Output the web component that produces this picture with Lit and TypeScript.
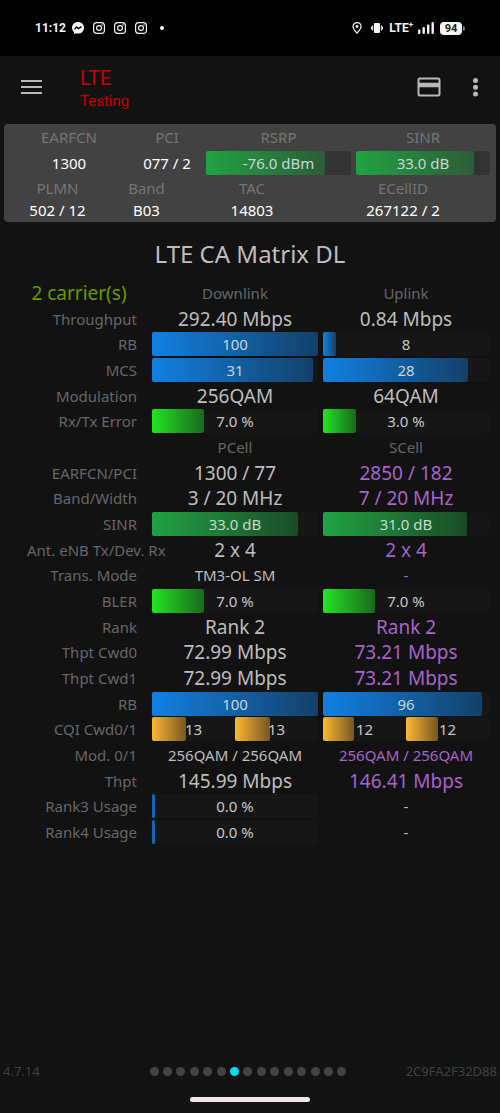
import { LitElement, html, css, nothing } from "lit";
import { customElement, property, state } from "lit/decorators.js";
import { classMap } from "lit/directives/class-map.js";
import { styleMap } from "lit/directives/style-map.js";

type Tone = "blue" | "green" | "lime" | "amber";
interface Bar { text: string; fill: number; tone: Tone }
interface Cell { text?: string; small?: boolean; dim?: boolean; accent?: boolean; bars?: Bar[] }
interface Row { label: string; cells: Cell[] }

const bar = (text: string, fill: number, tone: Tone): Cell => ({ bars: [{ text, fill, tone }] });
const big = (text: string): Cell => ({ text });
const alt = (text: string, small = false): Cell => ({ text, small, accent: true });
const note = (text: string): Cell => ({ text, small: true });
const head = (text: string): Cell => ({ text, small: true, dim: true });

const ROWS: Row[] = [
  { label: "Throughput", cells: [big("292.40 Mbps"), big("0.84 Mbps")] },
  { label: "RB", cells: [bar("100", 100, "blue"), bar("8", 8, "blue")] },
  { label: "MCS", cells: [bar("31", 97, "blue"), bar("28", 87.5, "blue")] },
  { label: "Modulation", cells: [big("256QAM"), big("64QAM")] },
  { label: "Rx/Tx Error", cells: [bar("7.0 %", 31.5, "lime"), bar("3.0 %", 20, "lime")] },
  { label: "", cells: [head("PCell"), head("SCell")] },
  { label: "EARFCN/PCI", cells: [big("1300 / 77"), alt("2850 / 182")] },
  { label: "Band/Width", cells: [big("3 / 20 MHz"), alt("7 / 20 MHz")] },
  { label: "SINR", cells: [bar("33.0 dB", 88, "green"), bar("31.0 dB", 86.5, "green")] },
  { label: "Ant. eNB Tx/Dev. Rx", cells: [big("2 x 4"), alt("2 x 4")] },
  { label: "Trans. Mode", cells: [note("TM3-OL SM"), alt("-", true)] },
  { label: "BLER", cells: [bar("7.0 %", 31.5, "lime"), bar("7.0 %", 31.5, "lime")] },
  { label: "Rank", cells: [big("Rank 2"), alt("Rank 2")] },
  { label: "Thpt Cwd0", cells: [big("72.99 Mbps"), alt("73.21 Mbps")] },
  { label: "Thpt Cwd1", cells: [big("72.99 Mbps"), alt("73.21 Mbps")] },
  { label: "RB", cells: [bar("100", 100, "blue"), bar("96", 96, "blue")] },
  {
    label: "CQI Cwd0/1",
    cells: [
      { bars: [{ text: "13", fill: 41.5, tone: "amber" }, { text: "13", fill: 42.5, tone: "amber" }] },
      { bars: [{ text: "12", fill: 37.5, tone: "amber" }, { text: "12", fill: 38.5, tone: "amber" }] },
    ],
  },
  { label: "Mod. 0/1", cells: [note("256QAM / 256QAM"), alt("256QAM / 256QAM", true)] },
  { label: "Thpt", cells: [big("145.99 Mbps"), alt("146.41 Mbps")] },
  { label: "Rank3 Usage", cells: [bar("0.0 %", 2, "blue"), note("-")] },
  { label: "Rank4 Usage", cells: [bar("0.0 %", 2, "blue"), note("-")] },
];

@customElement("level-bar")
class LevelBar extends LitElement {
  @property() text = "";
  @property({ type: Number }) fill = 0;
  @property() tone: Tone = "blue";

  static styles = css`
    :host { display: block; flex: 1 1 0; min-width: 0; }
    .track { display: grid; height: 24px; border-radius: 2px; background: var(--track, #161616); }
    .fill, .text { grid-area: 1 / 1; }
    .fill { border-radius: 2px; }
    .text { text-align: center; line-height: 24px; font-size: var(--bar-text, 14px); color: #c6c6c6; z-index: 1; white-space: nowrap; }
    .filled { color: #c8d6d4; }
    .blue { background: linear-gradient(90deg, #1180e2, #14406a); }
    .green { background: linear-gradient(90deg, #21a243, var(--green-end, #1b4b26)); }
    .lime { background: linear-gradient(90deg, #23e423, #1a691b); }
    .amber { background: linear-gradient(90deg, #fcb834, #765721); }
    .tiny { background: #1366b2; }
  `;

  render() {
    return html`<div class="track" role="meter" aria-valuenow=${this.fill} aria-valuetext=${this.text}>
      <div class=${classMap({ fill: true, [this.tone]: true, tiny: this.fill < 5 })}
        style=${styleMap({ width: `${this.fill}%` })}></div>
      <div class=${classMap({ text: true, filled: this.fill > 50 })}>${this.text}</div>
    </div>`;
  }
}

@customElement("status-bar")
class StatusBar extends LitElement {
  static styles = css`
    :host { display: flex; align-items: center; justify-content: space-between; height: 56px;
      padding: 0 35px; background: #000; color: #f4f4f4; font-family: Roboto, sans-serif; }
    .group { display: flex; align-items: center; }
    .left { gap: 9px; }
    .time { width: 28px; font-size: 12px; font-weight: 700; line-height: 16px; }
    .dot { width: 4px; height: 4px; border-radius: 2px; background: #f4f4f4; margin-left: 4px; }
    .icon { display: block; }
    .vibrate { margin-left: 9px; }
    .battery { display: flex; align-items: center; margin-left: 6px; }
    .level { background: #f4f4f4; color: #222; border-radius: 4px; width: 22px; height: 13px;
      font-size: 11px; line-height: 13px; font-weight: 700; text-align: center; }
    .cap { width: 2px; height: 5px; background: #777; border-radius: 0 2px 2px 0; margin-left: 1px; }
    .lte { font-size: 12px; font-weight: 700; line-height: 16px; margin-left: 6px; }
    .plus { font-size: 8px; vertical-align: 5px; line-height: 1px; }
    .signal { margin-left: 5px; }
  `;

  private camera() {
    return html`<svg class="icon" width="12" height="12" viewBox="0 0 12 12" fill="none" stroke="#f4f4f4">
      <rect x=".6" y=".6" width="10.8" height="10.8" rx="3.2" stroke-width="1.2"></rect>
      <circle cx="6" cy="6" r="2.4" stroke-width="1.2"></circle>
      <circle cx="9" cy="3" r=".5" fill="#f4f4f4" stroke-width=".4"></circle>
    </svg>`;
  }

  render() {
    return html`
      <div class="group left">
        <span class="time">11:12</span>
        <svg class="icon" width="12" height="12" viewBox="0 0 12 12">
          <path fill="#f4f4f4" d="M6 0C2.6 0 0 2.4 0 5.7c0 1.7.7 3.2 1.9 4.2v1.7c0 .3.3.5.6.4l1.5-.7c.6.2 1.3.3 2 .3 3.4 0 6-2.5 6-5.9S9.4 0 6 0z"></path>
          <path d="M2.5 7.3l2-2.4 2 1.7 3-2" fill="none" stroke="#000" stroke-width="1.3"></path>
        </svg>
        ${this.camera()}${this.camera()}${this.camera()}
        <span class="dot"></span>
      </div>
      <div class="group">
        <svg class="icon" width="10" height="12" viewBox="0 0 10 12">
          <path d="M5 .7C2.7.7 1 2.3 1 4.6 1 7 5 11.2 5 11.2S9 7 9 4.6C9 2.3 7.3.7 5 .7z" fill="none" stroke="#f4f4f4" stroke-width="1.2"></path>
          <circle cx="5" cy="4.5" r="1.4" fill="#f4f4f4"></circle>
        </svg>
        <svg class="icon vibrate" width="12" height="12" viewBox="0 0 12 12" fill="#f4f4f4">
          <rect x="3" y="1" width="6" height="10" rx="1"></rect>
          <rect x="1.2" y="3.5" width="1" height="5"></rect><rect x="9.8" y="3.5" width="1" height="5"></rect>
          <rect x="0" y="4.5" width="1" height="3"></rect><rect x="11" y="4.5" width="1" height="3"></rect>
        </svg>
        <span class="lte">LTE<span class="plus">+</span></span>
        <svg class="icon signal" width="16" height="12" viewBox="0 0 16 12" fill="#f4f4f4">
          <rect x="0" y="7.5" width="2.4" height="4.5" rx="1"></rect>
          <rect x="4.5" y="5" width="2.4" height="7" rx="1"></rect>
          <rect x="9" y="2.5" width="2.4" height="9.5" rx="1"></rect>
          <rect x="13.5" y="0" width="2.4" height="12" rx="1"></rect>
        </svg>
        <span class="battery"><span class="level">94</span><span class="cap"></span></span>
      </div>`;
  }
}

@customElement("app-root")
class AppRoot extends LitElement {
  @state() private page = 6;

  static styles = css`
    :host { display: flex; flex-direction: column; min-height: 100vh; background: #121212; color: #bdbdbd;
      font-family: "Noto Sans", "Open Sans", sans-serif; font-size: 15px; --bar-text: 15px; }
    .toolbar { display: flex; align-items: center; box-sizing: border-box; height: 64px; padding: 0 13px 2px 19px; margin-bottom: 4px; }
    .icon-button { display: block; border: 0; padding: 0; background: none; color: #b9b9b9; }
    .icon-button svg { display: block; }
    .heading { flex: 1; padding: 4px 0 0 37px; color: #cb0000; font-family: Roboto, sans-serif; }
    .name { margin: 0; font-size: 20px; line-height: 24px; font-weight: 400; }
    .sub { margin: 0; font-size: 15px; line-height: 22px; }
    .more { margin-left: 22px; }
    .card { box-sizing: border-box; margin: 0 4px; padding: 2px 6px 0; height: 98px; border-radius: 4px; background: #424242;
      --track: #333; --green-end: #2d5c38; }
    .signal, .ids { display: grid; text-align: center; color: #fff; }
    .signal { grid-template-columns: 118fr 68fr 145fr 134fr; column-gap: 5px; }
    .ids { grid-template-columns: 95fr 83fr 128fr 174fr; margin-top: 2px; }
    .key { color: #757575; line-height: 22px; height: 25px; }
    .ids .key { height: 23px; }
    .value { line-height: 24px; }
    .ids .value { line-height: 20px; }
    .title { margin: 16px 0 10px; text-align: center; font-size: 24px; line-height: 32px; font-weight: 400; }
    .matrix { table-layout: fixed; border-collapse: collapse; width: calc(100% - 8px); height: 565px; }
    .matrix col.labels { width: 150px; }
    .matrix td, .matrix th { padding: 0 3px 0 2px; text-align: center; font-weight: 400; white-space: nowrap;
      font-size: 19px; line-height: 24px; }
    .matrix th.label { padding: 0 13px 0 27px; text-align: right; font-size: 15px; color: #666; }
    .matrix .small { font-size: 15px; }
    .matrix .dim { color: #666; }
    .matrix .accent { color: #a763cc; }
    .matrix th.carriers { padding: 0 8px 0 16px; color: #679a00; }
    .pair { display: flex; }
    .footer { display: grid; grid-template-columns: 1fr auto 1fr; align-items: center; margin-top: auto;
      padding: 0 3px; font-size: 13px; line-height: 20px; color: #404040; }
    .serial { text-align: right; }
    .dots { display: flex; justify-content: space-between; width: 197px; margin-right: 4px; }
    .dot { width: 9px; height: 9px; padding: 0; border: 0; border-radius: 50%; background: #434343; }
    .dot.current { background: #00dcff; }
    .home { align-self: center; width: 24%; height: 5px; margin: 16px 0 11px; border-radius: 3px; background: #ebe7eb; }
  `;

  private cell(c: Cell) {
    if (c.bars) {
      return html`<td><div class="pair">${c.bars.map(
        (b) => html`<level-bar .text=${b.text} .fill=${b.fill} .tone=${b.tone}></level-bar>`,
      )}</div></td>`;
    }
    return html`<td class=${classMap({ small: !!c.small, dim: !!c.dim, accent: !!c.accent })}>${c.text}</td>`;
  }

  render() {
    return html`
      <status-bar></status-bar>
      <header class="toolbar">
        <button class="icon-button" aria-label="Menu">
          <svg width="24" height="24" viewBox="0 0 24 24" fill="currentColor">
            <rect x="2" y="5" width="21" height="2"></rect><rect x="2" y="11" width="21" height="2"></rect><rect x="2" y="17" width="21" height="2"></rect>
          </svg>
        </button>
        <div class="heading"><h1 class="name">LTE</h1><p class="sub">Testing</p></div>
        <button class="icon-button" aria-label="SIM card">
          <svg width="24" height="24" viewBox="0 0 24 24" fill="none" stroke="currentColor">
            <rect x="1.5" y="3.5" width="21" height="17" rx="1.5" stroke-width="2"></rect>
            <path d="M2 10h20" stroke-width="4.500"></path>
          </svg>
        </button>
        <button class="icon-button more" aria-label="More options">
          <svg width="24" height="24" viewBox="0 0 24 24" fill="currentColor">
            <circle cx="12.500" cy="5.500" r="2.500"></circle><circle cx="12.500" cy="12.200" r="2.500"></circle><circle cx="12.500" cy="19" r="2.500"></circle>
          </svg>
        </button>
      </header>
      <section class="card">
        <div class="signal">
          <span class="key">EARFCN</span><span class="key">PCI</span><span class="key">RSRP</span><span class="key">SINR</span>
          <span class="value">1300</span><span class="value">077 / 2</span>
          <level-bar text="-76.0 dBm" fill="82" tone="green"></level-bar>
          <level-bar text="33.0 dB" fill="88" tone="green"></level-bar>
        </div>
        <div class="ids">
          <span class="key">PLMN</span><span class="key">Band</span><span class="key">TAC</span><span class="key">ECellID</span>
          <span class="value">502 / 12</span><span class="value">B03</span><span class="value">14803</span><span class="value">267122 / 2</span>
        </div>
      </section>
      <h2 class="title">LTE CA Matrix DL</h2>
      <table class="matrix">
        <colgroup><col class="labels"><col><col></colgroup>
        <tbody>
          <tr><th class="carriers">2 carrier(s)</th><th class="small dim">Downlink</th><th class="small dim">Uplink</th></tr>
          ${ROWS.map((r) => html`<tr><th class="label">${r.label || nothing}</th>${r.cells.map((c) => this.cell(c))}</tr>`)}
        </tbody>
      </table>
      <footer class="footer">
        <span>4.7.14</span>
        <nav class="dots" aria-label="Pages">${Array.from({ length: 15 }, (_, i) => html`
          <button class=${classMap({ dot: true, current: i === this.page })} aria-label="Page ${i + 1}"
            @click=${() => { this.page = i; }}></button>`)}</nav>
        <span class="serial">2C9FA2F32D88</span>
      </footer>
      <div class="home"></div>`;
  }
}
